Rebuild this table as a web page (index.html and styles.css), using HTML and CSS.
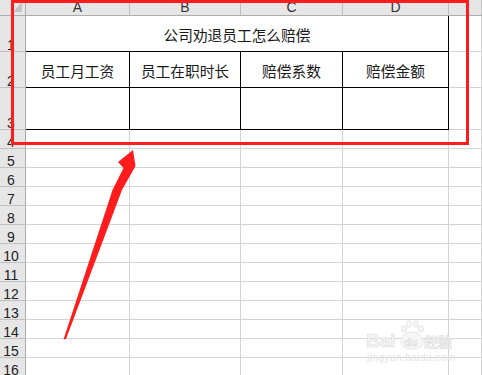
FILE: index.html
```html
<!DOCTYPE html>
<html lang="zh-CN">

<head>
    <meta charset="UTF-8">
    <meta name="viewport" content="width=device-width, initial-scale=1.0">
    <title>公司劝退员工怎么赔偿</title>
    <link rel="stylesheet" href="styles.css">
</head>

<body>

    <div class="sheet">
        <!-- 列标题 -->
        <div class="corner"><span class="corner-mark"></span></div>
        <div class="col-head">A</div>
        <div class="col-head">B</div>
        <div class="col-head">C</div>
        <div class="col-head">D</div>
        <div class="col-head"></div>

        <!-- 第1行：合并的标题 -->
        <div class="row-head">1</div>
        <div class="cell title">公司劝退员工怎么赔偿</div>
        <div class="cell"></div>

        <!-- 第2行：表头 -->
        <div class="row-head">2</div>
        <div class="cell boxed">员工月工资</div>
        <div class="cell boxed">员工在职时长</div>
        <div class="cell boxed">赔偿系数</div>
        <div class="cell boxed">赔偿金额</div>
        <div class="cell"></div>

        <!-- 第3行：空白数据行 -->
        <div class="row-head">3</div>
        <div class="cell boxed"></div>
        <div class="cell boxed"></div>
        <div class="cell boxed"></div>
        <div class="cell boxed"></div>
        <div class="cell"></div>

        <div class="row-head">4</div>
        <div class="cell"></div><div class="cell"></div><div class="cell"></div><div class="cell"></div><div class="cell"></div>
        <div class="row-head">5</div>
        <div class="cell"></div><div class="cell"></div><div class="cell"></div><div class="cell"></div><div class="cell"></div>
        <div class="row-head">6</div>
        <div class="cell"></div><div class="cell"></div><div class="cell"></div><div class="cell"></div><div class="cell"></div>
        <div class="row-head">7</div>
        <div class="cell"></div><div class="cell"></div><div class="cell"></div><div class="cell"></div><div class="cell"></div>
        <div class="row-head">8</div>
        <div class="cell"></div><div class="cell"></div><div class="cell"></div><div class="cell"></div><div class="cell"></div>
        <div class="row-head">9</div>
        <div class="cell"></div><div class="cell"></div><div class="cell"></div><div class="cell"></div><div class="cell"></div>
        <div class="row-head">10</div>
        <div class="cell"></div><div class="cell"></div><div class="cell"></div><div class="cell"></div><div class="cell"></div>
        <div class="row-head">11</div>
        <div class="cell"></div><div class="cell"></div><div class="cell"></div><div class="cell"></div><div class="cell"></div>
        <div class="row-head">12</div>
        <div class="cell"></div><div class="cell"></div><div class="cell"></div><div class="cell"></div><div class="cell"></div>
        <div class="row-head">13</div>
        <div class="cell"></div><div class="cell"></div><div class="cell"></div><div class="cell"></div><div class="cell"></div>
        <div class="row-head">14</div>
        <div class="cell"></div><div class="cell"></div><div class="cell"></div><div class="cell"></div><div class="cell"></div>
        <div class="row-head">15</div>
        <div class="cell"></div><div class="cell"></div><div class="cell"></div><div class="cell"></div><div class="cell"></div>
        <div class="row-head">16</div>
        <div class="cell"></div><div class="cell"></div><div class="cell"></div><div class="cell"></div><div class="cell"></div>
    </div>

    <!-- 红色标注框 -->
    <div class="callout"></div>

    <!-- 红色箭头 -->
    <svg class="arrow" width="482" height="375" viewBox="0 0 482 375">
        <polygon points="133,150 135.5,166 122,190 66,339 63.5,339.5 112.5,190 123.5,168 118,162" fill="#ff1c1c" />
    </svg>

    <!-- 水印 -->
    <svg class="watermark" width="100" height="52" viewBox="0 0 100 52">
        <g fill="#f6f6f6" stroke="#dedede" stroke-width="0.7">
            <text x="6" y="32" font-size="19" font-weight="bold" font-family="Liberation Sans, sans-serif">Bai</text>
            <ellipse cx="44" cy="14" rx="2.6" ry="3.2" />
            <ellipse cx="49" cy="9" rx="2.6" ry="3.2" />
            <ellipse cx="56" cy="9" rx="2.6" ry="3.2" />
            <ellipse cx="61" cy="14" rx="2.6" ry="3.2" />
            <path d="M41 28 C41 20 47 17 52 17 C57 17 63 20 63 28 C63 33 57 34 52 34 C47 34 41 33 41 28 Z" />
            <text x="44" y="31" font-size="11" font-weight="bold" font-family="Liberation Sans, sans-serif">du</text>
            <text x="64" y="32" font-size="14" font-weight="bold" font-family="Noto Sans CJK SC, sans-serif">经验</text>
        </g>
        <text class="watermark-url" x="7" y="46" font-size="10" textLength="88" font-family="Liberation Sans, sans-serif">jingyan.baidu.com</text>
    </svg>

</body>

</html>
```

FILE: styles.css
```css
* {
    margin: 0;
    padding: 0;
    box-sizing: border-box;
}

body {
    position: relative;
    width: 482px;
    height: 375px;
    overflow: hidden;
    background: #fff;
    font-family: "Liberation Sans", "Noto Sans CJK SC", sans-serif;
}

/* 表格区域：行号列 + A~E 列 */
.sheet {
    display: grid;
    grid-template-columns: 26px 104px 111px 102px 106px 33px;
    grid-template-rows: 16px 36px 36px 42px repeat(13, 19px);
}

.corner {
    position: relative;
    background: #e6e6e6;
    border-right: 1px solid #ababab;
    border-bottom: 1px solid #ababab;
}

/* 左上角的小三角 */
.corner-mark {
    position: absolute;
    right: 3px;
    bottom: 3px;
    width: 0;
    height: 0;
    border-left: 9px solid transparent;
    border-bottom: 10px solid #c3c3c3;
}

.col-head {
    background: #e6e6e6;
    border-right: 1px solid #c0c0c0;
    border-bottom: 1px solid #ababab;
    text-align: center;
    font-size: 14px;
    line-height: 15px;
    color: #333;
}

/* 行号靠底显示 */
.row-head {
    display: flex;
    align-items: flex-end;
    justify-content: center;
    padding-right: 3px;
    background: #e6e6e6;
    border-right: 1px solid #ababab;
    border-bottom: 1px solid #c0c0c0;
    font-size: 14px;
    line-height: 12px;
    color: #222;
}

.cell {
    display: flex;
    align-items: center;
    justify-content: center;
    padding-top: 2px;
    border-right: 1px solid #d4d4d4;
    border-bottom: 1px solid #d4d4d4;
    font-family: "Noto Sans CJK SC", sans-serif;
    font-size: 14.7px;
    color: #1a1a1a;
}

.boxed {
    border-color: #000;
}

.title {
    grid-column: span 4;
    border-color: #000;
}

.callout {
    position: absolute;
    left: 11px;
    top: 0;
    width: 458px;
    height: 145px;
    border: 3px solid #ff1c1c;
}

.arrow {
    position: absolute;
    left: 0;
    top: 0;
    pointer-events: none;
}

.watermark {
    position: absolute;
    left: 360px;
    top: 315px;
}

.watermark-url {
    fill: #e4e4e4;
}
```
